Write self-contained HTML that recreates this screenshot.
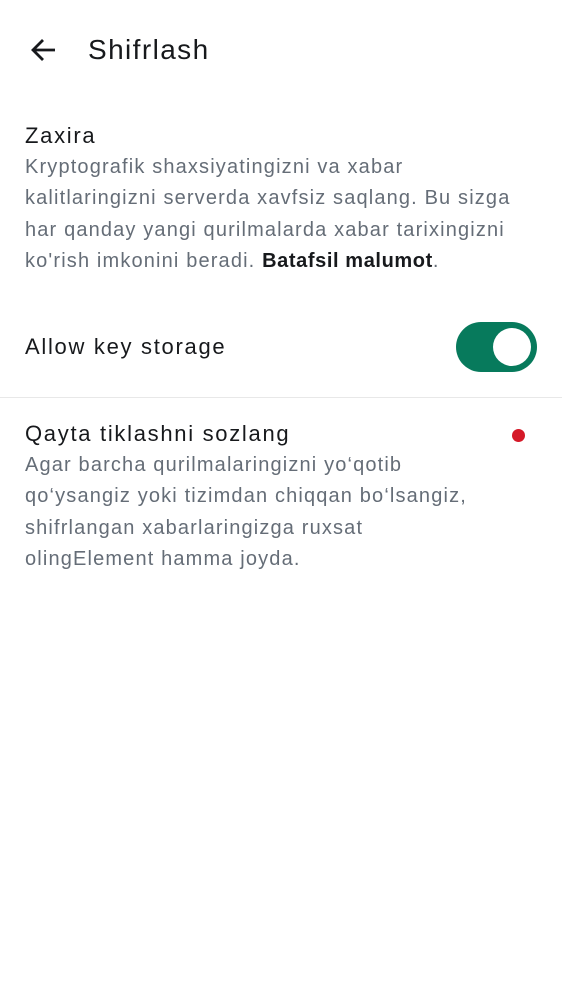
<!DOCTYPE html>
<html><head><style>
body{margin:0;width:562px;height:1000px;background:#fff;font-family:"Liberation Sans",sans-serif;position:relative;overflow:hidden}
.a{position:absolute;white-space:nowrap}
.t{color:#17191c;font-size:22px;letter-spacing:1.7px}
.d{color:#656d77;font-size:20px;line-height:31.3px;white-space:normal;letter-spacing:1.15px}
</style></head><body>
<svg class="a" style="left:29px;top:37px" width="28" height="26" viewBox="0 0 28 26"><path d="M26 13H4M14 3L4 13l10 10" fill="none" stroke="#17191c" stroke-width="2.8"/></svg>
<div class="a" style="left:88px;top:34px;font-size:28px;color:#17191c;letter-spacing:1.4px">Shifrlash</div>
<div class="a t" style="left:25px;top:123px">Zaxira</div>
<div class="a d" style="left:25px;top:152px;width:537px">Kryptografik shaxsiyatingizni va xabar<br>kalitlaringizni serverda xavfsiz saqlang. Bu sizga<br>har qanday yangi qurilmalarda xabar tarixingizni<br>ko'rish imkonini beradi. <b style="color:#17191c;letter-spacing:0.6px">Batafsil malumot</b>.</div>
<div class="a t" style="left:25px;top:334px">Allow key storage</div>
<div class="a" style="left:456px;top:322px;width:81px;height:50px;border-radius:25px;background:#077a5c"></div>
<div class="a" style="left:493px;top:328px;width:38px;height:38px;border-radius:50%;background:#fff"></div>
<div class="a" style="left:0;top:397px;width:562px;height:1px;background:#e8e8e8"></div>
<div class="a t" style="left:25px;top:421px">Qayta tiklashni sozlang</div>
<div class="a" style="left:512px;top:429px;width:13px;height:13px;border-radius:50%;background:#d51928"></div>
<div class="a d" style="left:25px;top:450px;width:537px">Agar barcha qurilmalaringizni yo‘qotib<br>qo‘ysangiz yoki tizimdan chiqqan bo‘lsangiz,<br>shifrlangan xabarlaringizga ruxsat<br>olingElement hamma joyda.</div>
</body></html>
